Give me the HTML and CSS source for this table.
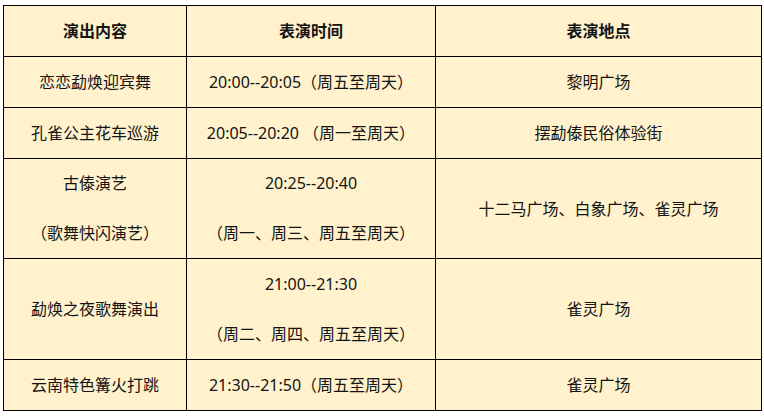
FILE: index.html
```html
<!DOCTYPE html>
<html lang="zh-CN">
<head>
<meta charset="utf-8">
<link rel="stylesheet" href="styles.css">
</head>
<body>
<table class="schedule">
  <colgroup>
    <col class="c1"><col class="c2"><col class="c3">
  </colgroup>
  <thead>
    <tr><th>演出内容</th><th>表演时间</th><th>表演地点</th></tr>
  </thead>
  <tbody>
    <tr><td>恋恋勐焕迎宾舞</td><td>20:00--20:05（周五至周天）</td><td>黎明广场</td></tr>
    <tr><td>孔雀公主花车巡游</td><td>20:05--20:20 （周一至周天）</td><td>摆勐傣民俗体验街</td></tr>
    <tr class="snug"><td><div>古傣演艺</div><div>（歌舞快闪演艺）</div></td><td><div>20:25--20:40</div><div>（周一、周三、周五至周天）</div></td><td>十二马广场、白象广场、雀灵广场</td></tr>
    <tr><td>勐焕之夜歌舞演出</td><td><div>21:00--21:30</div><div>（周二、周四、周五至周天）</div></td><td>雀灵广场</td></tr>
    <tr><td>云南特色篝火打跳</td><td>21:30--21:50（周五至周天）</td><td>雀灵广场</td></tr>
  </tbody>
</table>
</body>
</html>
```

FILE: styles.css
```css
html, body {
  margin: 0;
  padding: 0;
  background: #ffffff;
}
body {
  padding: 5px 0 0 3px;
  font-family: "Noto Sans", "Noto Sans CJK SC", sans-serif;
  font-size: 16px;
  color: #141414;
}
.schedule {
  border-collapse: collapse;
  table-layout: fixed;
  width: 758px;
  background: #fff2cc;
}
.c1 { width: 183px; }
.c2 { width: 249px; }
.c3 { width: 326px; }
.schedule th,
.schedule td {
  border: 1px solid #000;
  padding: 0;
  height: 50px;
  line-height: 50px;
  text-align: center;
  vertical-align: middle;
  white-space: nowrap;
}
.schedule th {
  font-weight: bold;
}
.snug td div {
  line-height: 49.5px;
}
```
